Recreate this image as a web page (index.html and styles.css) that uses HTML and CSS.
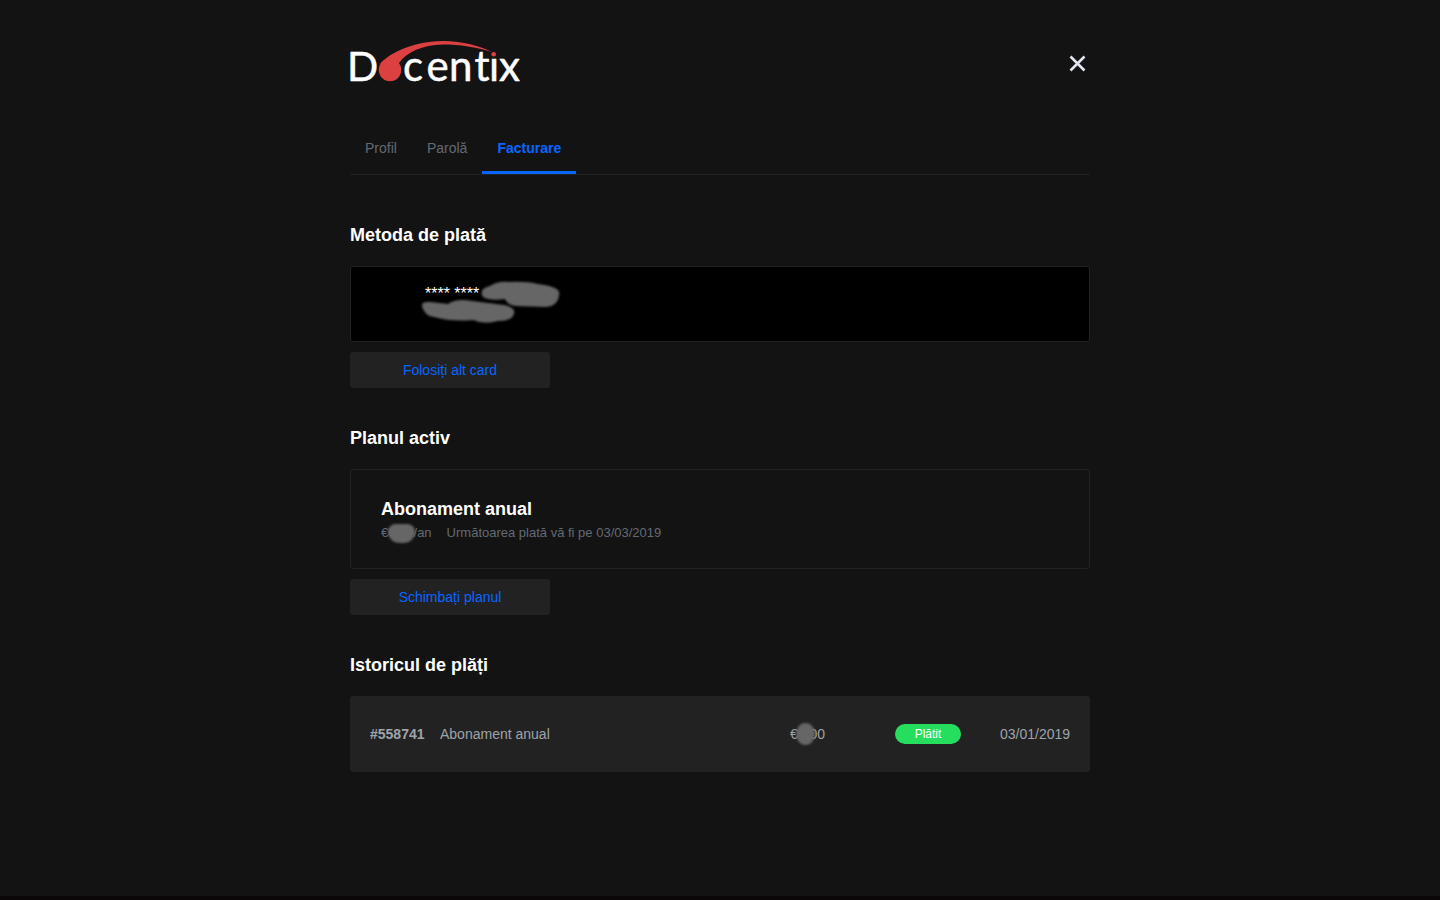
FILE: index.html
```html
<!DOCTYPE html>
<html lang="ro">
<head>
    <meta charset="UTF-8">
    <meta name="viewport" content="width=device-width, initial-scale=1.0">
    <title>Docentix - Facturare</title>
    <link rel="stylesheet" href="styles.css">
</head>
<body>
    <div class="container">
        <header class="header">
            <svg class="logo" width="172" height="44" viewBox="0 0 172 44" role="img" aria-label="Docentix">
                <text class="logo-text logo-cap" x="-3" y="41.500">D</text>
                <text class="logo-text" x="53 76.500 99 124.500 139 149" y="41.500">centix</text>
                <!-- the dot of the i is red -->
                <circle class="logo-dot-bg" cx="144" cy="13" r="4.500"/>
                <path class="logo-red" d="M30 25 C36 17 60 2 93 2 C113 2 130 7 142 13 C126 8 110 5.500 93 5.500 C72 6 57 13 49 24 Z"/>
                <circle class="logo-red" cx="40" cy="31" r="11.200"/>
                <circle class="logo-red" cx="143.700" cy="15.200" r="2.300"/>
            </svg>
            <button class="close" type="button" aria-label="Închide">
                <svg width="17" height="17" viewBox="0 0 17 17">
                    <path d="M1.500 1.500 L15.500 15.500 M15.500 1.500 L1.500 15.500"/>
                </svg>
            </button>
        </header>

        <nav class="tabs">
            <a class="tab" href="#">Profil</a>
            <a class="tab" href="#">Parolă</a>
            <a class="tab active" href="#">Facturare</a>
        </nav>

        <section class="section">
            <h2>Metoda de plată</h2>
            <div class="card">
                <span class="card-number">**** ****</span>
                <svg class="smudge card-smudge" width="150" height="50" viewBox="0 0 150 50">
                    <path d="M69 22 Q64 14 76 11 Q84 6 94 7 Q112 6 124 9 Q148 12 145 20 Q144 31 132 32 L103 31 Q94 31 91 24 Q76 26 69 22 Z"/>
                    <path d="M9 34 Q5 26 16 27 L34 29 Q42 23 58 26 L90 30 Q104 33 99 41 Q96 46 84 46 Q70 50 59 45 Q38 47 20 42 Q12 41 9 34 Z"/>
                </svg>
            </div>
            <button class="btn" type="button">Folosiți alt card</button>
        </section>

        <section class="section">
            <h2>Planul activ</h2>
            <div class="plan">
                <h3>Abonament anual</h3>
                <div class="plan-info">
                    <span class="price">€0.00/an<i class="blot"></i></span>
                    <span>Următoarea plată vă fi pe 03/03/2019</span>
                </div>
            </div>
            <button class="btn" type="button">Schimbați planul</button>
        </section>

        <section class="section">
            <h2>Istoricul de plăți</h2>
            <div class="payment">
                <span class="payment-id">#558741</span>
                <span class="payment-name">Abonament anual</span>
                <span class="payment-sum">€0.00<i class="blot"></i></span>
                <span class="badge">Plătit</span>
                <span class="payment-date">03/01/2019</span>
            </div>
        </section>
    </div>
    <div class="bottom-line"></div>
</body>
</html>
```
FILE: styles.css
```css
* {
    box-sizing: border-box;
}

body {
    margin: 0;
    height: 100vh;
    display: flex;
    flex-direction: column;
    overflow: hidden;
    background-color: #131313;
    color: #fff;
    font-family: "Liberation Sans", Arial, sans-serif;
    font-size: 14px;
}

.container {
    width: 740px;
    margin: 0 auto;
    flex: 1;
}

.header {
    display: flex;
    justify-content: space-between;
    align-items: flex-start;
    height: 122px;
    padding-top: 39px;
}

.logo {
    display: block;
    overflow: visible;
}

.logo-text {
    font-family: Lato, sans-serif;
    font-size: 42px;
    fill: #fff;
    stroke: #fff;
    stroke-width: 0.5;
    stroke-linejoin: round;
}

.logo-cap {
    font-size: 41px;
}

.logo-dot-bg {
    fill: #131313;
}

.logo-red {
    fill: #dd4040;
}

.close {
    margin: 16px 4px 0 0;
    padding: 0;
    border: none;
    background: none;
    cursor: pointer;
}

.close svg {
    display: block;
    fill: none;
    stroke: #e1e7ef;
    stroke-width: 2.6;
}

.tabs {
    display: flex;
    height: 53px;
    border-bottom: 1px solid #222;
}

.tab {
    height: 52px;
    padding: 0 15px;
    line-height: 52px;
    color: #636a73;
    text-decoration: none;
}

.tab.active {
    border-bottom: 3px solid #0866ff;
    color: #0866ff;
    font-weight: bold;
}

.section {
    padding-top: 50px;
}

.section + .section {
    padding-top: 40px;
}

h2,
h3 {
    margin: 0;
    font-size: 18px;
    line-height: 20px;
}

h2 {
    margin-bottom: 21px;
}

.card {
    position: relative;
    height: 76px;
    padding: 18px 0 0 74px;
    border: 1px solid #222;
    border-radius: 3px;
    background-color: #000;
}

.card-number {
    display: block;
    font-size: 16px;
    line-height: 18px;
}

.smudge {
    position: absolute;
    fill: #666;
    filter: blur(1px);
}

.card-smudge {
    left: 63px;
    top: 8px;
}

.btn {
    display: block;
    width: 200px;
    height: 36px;
    margin-top: 10px;
    padding: 0;
    border: none;
    border-radius: 3px;
    background-color: #222;
    color: #0866ff;
    font-family: inherit;
    font-size: 14px;
    cursor: pointer;
}

.plan {
    height: 100px;
    padding: 29px 30px;
    border: 1px solid #222;
    border-radius: 3px;
}

.plan-info {
    display: flex;
    gap: 15px;
    margin-top: 5px;
    color: #636a73;
    font-size: 13px;
    line-height: 18px;
}

.price,
.payment-sum {
    position: relative;
}

.blot {
    position: absolute;
    left: 7px;
    top: 0;
    width: 27px;
    height: 19px;
    border-radius: 9px 9px 13px 13px;
    background-color: #666;
    filter: blur(1px);
}

.payment {
    display: grid;
    grid-template-columns: 70px 350px 105px 105px 70px;
    align-items: center;
    height: 76px;
    padding: 0 20px;
    border-radius: 3px;
    background-color: #222;
    color: #9ea4ab;
}

.payment-id {
    font-weight: bold;
}

.payment-sum .blot {
    left: 6px;
    top: -3px;
    width: 19px;
    height: 22px;
    border-radius: 50%;
}

.badge {
    width: 66px;
    height: 20px;
    border-radius: 10px;
    background-color: #26de5d;
    color: #fff;
    font-size: 12px;
    line-height: 20px;
    text-align: center;
}

.bottom-line {
    height: 4px;
    background-color: #0b0709;
}
```
